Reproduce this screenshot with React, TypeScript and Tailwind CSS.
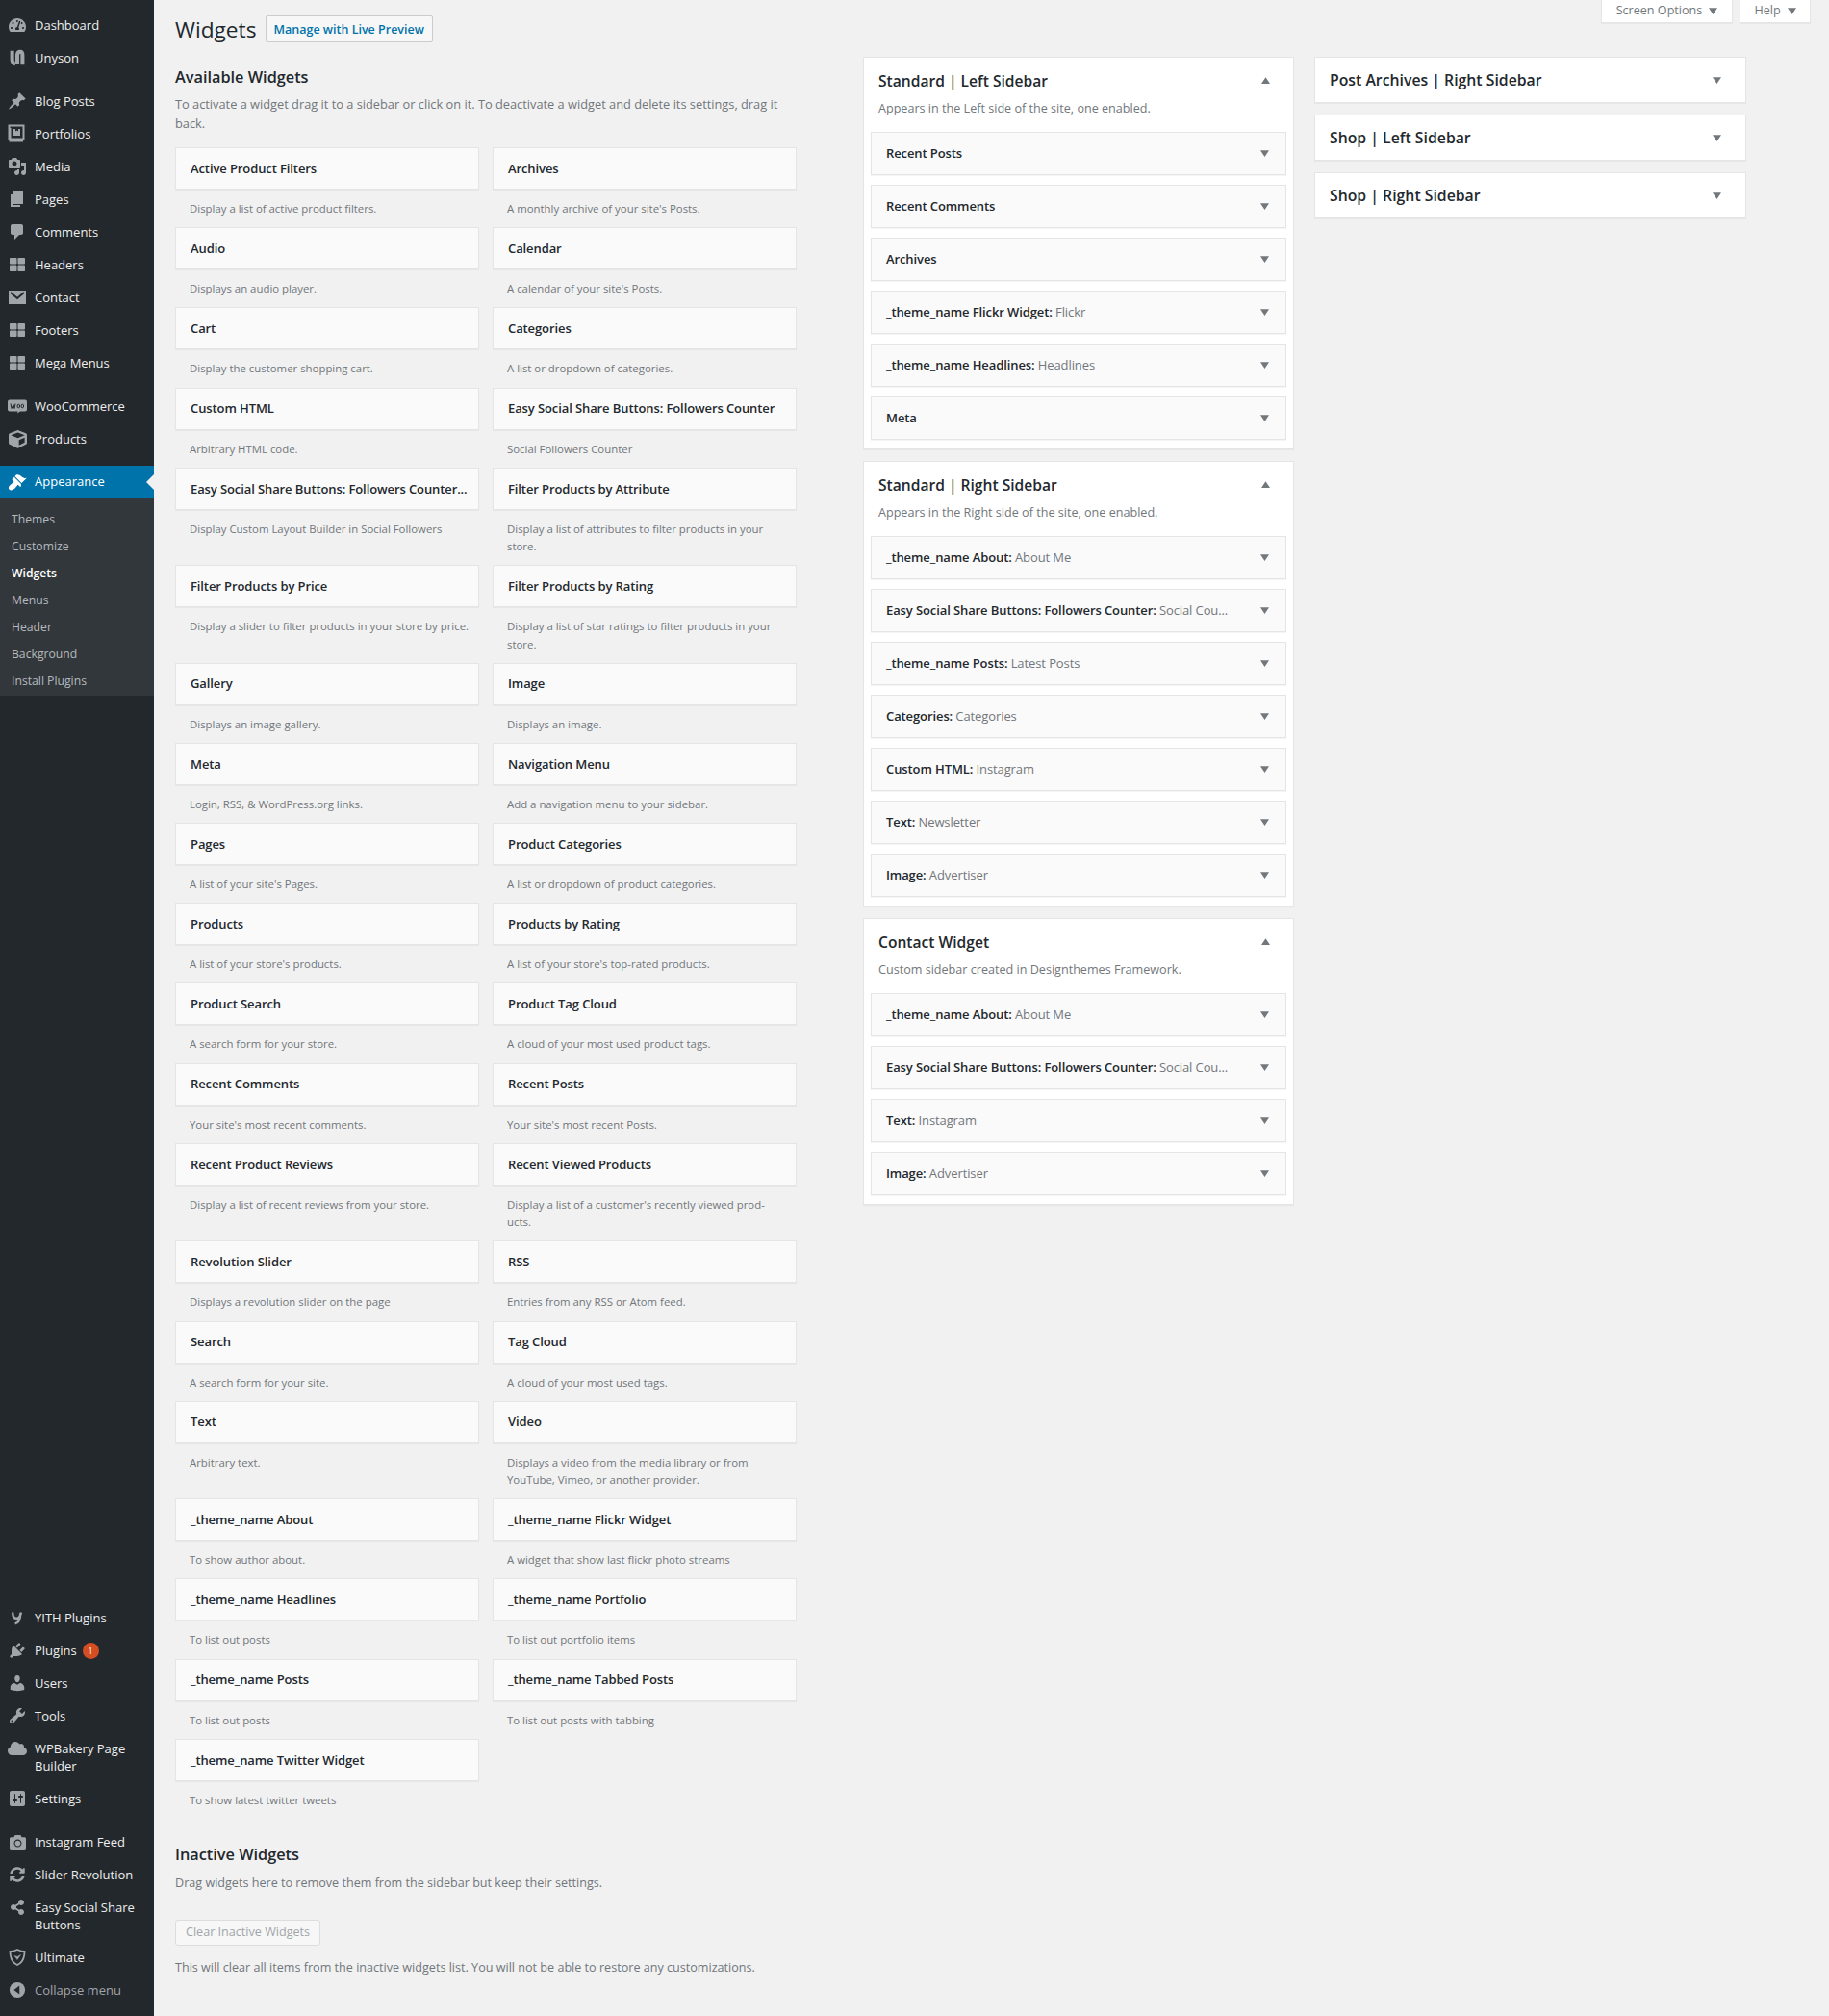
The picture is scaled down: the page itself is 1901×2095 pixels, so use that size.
import React from 'react';
import { FaTachometerAlt, FaThLarge, FaCube, FaCloud, FaCamera, FaSyncAlt, FaShareAlt } from 'react-icons/fa';

const fontStack = { fontFamily: '"Open Sans", "Noto Sans", sans-serif' };

const Dash = ({ d }: { d: string }) => (
  <svg viewBox="0 0 20 20" className="w-[20px] h-[20px]" fill="currentColor"><path d={d} /></svg>
);

const pinPath = 'M10.44 3.02l1.82-1.82 6.36 6.35-1.83 1.82c-1.05-.68-2.48-.57-3.41.36l-.75.75c-.92.93-1.04 2.35-.35 3.41l-1.83 1.82-2.41-2.41-2.8 2.79c-.42.42-3.38 2.71-3.8 2.29s1.86-3.39 2.28-3.81l2.79-2.79L4.1 9.36l1.83-1.82c1.05.69 2.48.57 3.4-.36l.75-.75c.93-.92 1.05-2.35.36-3.41z';
const commentPath = 'M5 2h9c1.1 0 2 .9 2 2v7c0 1.1-.9 2-2 2h-2l-5 5v-5H5c-1.1 0-2-.9-2-2V4c0-1.1.9-2 2-2z';
const pagePath = 'M6 15V2h10v13H6zm-1 1h8v2H3V5h2v11z';
const mediaPath = 'M13 11V4c0-.55-.45-1-1-1h-1.67L9 1H5L3.67 3H2c-.55 0-1 .45-1 1v7c0 .55.45 1 1 1h10c.55 0 1-.45 1-1zM7 4.5c1.38 0 2.5 1.12 2.5 2.5S8.38 9.5 7 9.5 4.5 8.38 4.5 7 5.62 4.5 7 4.5zM14 6h5v10.5c0 1.38-1.12 2.5-2.5 2.5S14 17.88 14 16.5s1.12-2.5 2.5-2.5c.17 0 .34.02.5.05V9h-3V6zm-4 8.05V13h2v3.5c0 1.38-1.12 2.5-2.5 2.5S7 17.88 7 16.5 8.12 14 9.500 14c.17 0 .34.02.5.05z';
const usersPath = 'M10 9.25c-2.27 0-2.73-3.44-2.73-3.44C7 4.02 7.82 2 9.97 2c2.16 0 2.98 2.02 2.71 3.81 0 0-.41 3.44-2.68 3.44zm0 2.57L12.72 10c2.39 0 4.52 2.33 4.52 4.53v2.49s-3.65 1.13-7.24 1.13c-3.65 0-7.24-1.13-7.24-1.13v-2.49c0-2.25 1.94-4.48 4.15-4.48z';
const toolsPath = 'M16.68 9.77c-1.34 1.34-3.3 1.67-4.95.99l-5.41 6.52c-.99.99-2.59.99-3.58 0s-.99-2.59 0-3.57l6.52-5.42c-.68-1.65-.35-3.61.99-4.95 1.28-1.28 3.12-1.62 4.72-1.06l-2.89 2.89 2.82 2.82 2.86-2.87c.53 1.58.18 3.4-1.08 4.67zM3.81 16.21c.4.39 1.04.39 1.43 0 .4-.4.4-1.04 0-1.44-.39-.39-1.03-.39-1.43 0-.39.4-.39 1.04 0 1.44z';
const pluginsPath = 'M13.11 4.36L9.87 7.6 8 5.73l3.24-3.24c.35-.34 1.05-.2 1.56.32.52.51.66 1.21.31 1.55zm-8 1.77l.91-1.12 9.01 9.01-1.19.84c-.71.71-2.63 1.16-3.82 1.16H6.14L4.9 17.26c-.59.59-1.54.59-2.12 0-.59-.58-.59-1.53 0-2.12l1.24-1.24v-3.88c0-1.13.4-3.19 1.09-3.89zm7.26 3.97l3.24-3.24c.34-.35 1.04-.21 1.55.31.52.51.66 1.21.31 1.55l-3.24 3.25z';
const settingsPath = 'M18 16V4c0-1.1-.9-2-2-2H4c-1.1 0-2 .9-2 2v12c0 1.1.9 2 2 2h12c1.1 0 2-.9 2-2zM8 11h1c.55 0 1 .45 1 1s-.45 1-1 1H8v1.5c0 .28-.22.5-.5.5s-.5-.22-.5-.5V13H6c-.55 0-1-.45-1-1s.45-1 1-1h1V5.500c0-.28.22-.5.5-.5s.5.22.5.5V11zm5-2h-1c-.55 0-1-.45-1-1s.45-1 1-1h1V5.500c0-.28.22-.5.5-.5s.5.22.5.5V7h1c.55 0 1 .45 1 1s-.45 1-1 1h-1v5.500c0 .28-.22.5-.5.5s-.5-.22-.5-.5V9z';
const appearancePath = 'M14.48 11.06L7.41 3.99l1.5-1.5c.5-.56 2.3-.47 3.51.32 1.21.8 1.43 1.28 2.91 2.1 1.18.64 2.45 1.26 4.45.85zm-.71.71L6.7 4.7 4.93 6.47c-.39.39-.39 1.02 0 1.41l1.06 1.06c.39.39.39 1.03 0 1.42-.6.6-1.43 1.11-2.21 1.69-.35.26-.7.53-1.01.84C1.43 13.73 0 16.18 1.59 17.77c1.59 1.59 4.03.15 5.88-1.17.31-.31.58-.65.84-1.01.59-.78 1.1-1.6 1.7-2.19.39-.39 1.03-.39 1.42 0l1.06 1.06c.39.39 1.02.39 1.41 0z';

const UnysonIcon = () => (
  <svg viewBox="0 0 20 20" className="w-[18px] h-[18px]" fill="none" stroke="currentColor" strokeWidth="4.5">
    <path d="M4 2v10c0 3 1.500 5 3.500 5M10 17V7c0-3 1.500-4 3.500-4s2.500 2 2.500 4v11" />
  </svg>
);

const PortfolioIcon = () => (
  <svg viewBox="0 0 20 20" className="w-[20px] h-[20px]" fill="none" stroke="currentColor">
    <path d="M2.500 4v13.500H16" strokeWidth="2" />
    <rect x="1.500" y="1.500" width="15" height="14" strokeWidth="2" />
    <path d="M5 12V5h8v7z" fill="currentColor" stroke="none" />
    <path d="M8 4.500v3l1.500-1 1.500 1v-3z" fill="#23282d" stroke="none" />
  </svg>
);

const MailIcon = () => (
  <svg viewBox="0 0 20 20" className="w-[20px] h-[20px]">
    <rect x="1" y="3" width="18" height="14" fill="currentColor" />
    <path d="M3 5l7 6 7-6" fill="none" stroke="#23282d" strokeWidth="2" />
  </svg>
);

const WooIcon = () => (
  <svg viewBox="0 0 20 14" className="w-[20px] h-[15px]">
    <path d="M2 0h16a2 2 0 0 1 2 2v8a2 2 0 0 1-2 2h-5l-3 2 .5-2H2a2 2 0 0 1-2-2V2a2 2 0 0 1 2-2z" fill="currentColor" />
    <path d="M3 4l1 5 2-4 1 4 1-5M10 6.500a1.300 1.800 0 1 0 2.600 0a1.300 1.800 0 1 0-2.600 0M14 6.500a1.300 1.800 0 1 0 2.600 0a1.300 1.800 0 1 0-2.600 0" fill="none" stroke="#23282d" strokeWidth="1" />
  </svg>
);

const YithIcon = () => (
  <svg viewBox="0 0 20 20" className="w-[16px] h-[16px]" fill="none" stroke="currentColor" strokeWidth="3">
    <path d="M4 3c0 6 2 8 5 8s5-3 6-8M14 4c0 8-2 13-7 14" />
  </svg>
);

const ShieldIcon = () => (
  <svg viewBox="0 0 20 20" className="w-[20px] h-[20px]" fill="none" stroke="currentColor">
    <path d="M10 2c3 1.500 5 2 7.500 2 0 7-2 11.500-7.500 14C4.500 15.500 2.500 11 2.500 4 5 4 7 3.500 10 2z" strokeWidth="1.800" />
    <path d="M7 8.500l3 4 3.500-5-3.500 2z" fill="currentColor" strokeWidth="0.500" />
  </svg>
);

const CollapseIcon = () => (
  <svg viewBox="0 0 20 20" className="w-[18px] h-[18px]">
    <circle cx="10" cy="10" r="9" fill="currentColor" />
    <path d="M12.500 5v10L6 10z" fill="#23282d" />
  </svg>
);

const Triangle = ({ up = false, className = '' }: { up?: boolean; className?: string }) => (
  <svg viewBox="0 0 8 6" className={`w-[9px] h-[7px] fill-[#72777c] ${className}`}>
    <path d={up ? 'M4 0l4 6H0z' : 'M0 0h8L4 6z'} />
  </svg>
);

const topMenu: { label: string; icon: React.ReactNode; gap?: boolean }[] = [
  { label: 'Dashboard', icon: <FaTachometerAlt size={18} /> },
  { label: 'Unyson', icon: <UnysonIcon /> },
  { label: 'Blog Posts', icon: <Dash d={pinPath} />, gap: true },
  { label: 'Portfolios', icon: <PortfolioIcon /> },
  { label: 'Media', icon: <Dash d={mediaPath} /> },
  { label: 'Pages', icon: <Dash d={pagePath} /> },
  { label: 'Comments', icon: <Dash d={commentPath} /> },
  { label: 'Headers', icon: <FaThLarge size={16} /> },
  { label: 'Contact', icon: <MailIcon /> },
  { label: 'Footers', icon: <FaThLarge size={16} /> },
  { label: 'Mega Menus', icon: <FaThLarge size={16} /> },
  { label: 'WooCommerce', icon: <WooIcon />, gap: true },
  { label: 'Products', icon: <FaCube size={19} /> },
];

const subMenu = ['Themes', 'Customize', 'Widgets', 'Menus', 'Header', 'Background', 'Install Plugins'];

const bottomMenu: { label: React.ReactNode; icon: React.ReactNode; gap?: boolean; dim?: boolean }[] = [
  { label: 'YITH Plugins', icon: <YithIcon /> },
  {
    label: (
      <span className="flex items-center gap-[6px]">
        Plugins
        <span className="w-[17px] h-[17px] rounded-full bg-[#d54e21] text-white text-[9px] leading-[17px] text-center">1</span>
      </span>
    ),
    icon: <Dash d={pluginsPath} />,
  },
  { label: 'Users', icon: <Dash d={usersPath} /> },
  { label: 'Tools', icon: <Dash d={toolsPath} /> },
  { label: 'WPBakery Page Builder', icon: <FaCloud size={20} /> },
  { label: 'Settings', icon: <Dash d={settingsPath} /> },
  { label: 'Instagram Feed', icon: <FaCamera size={17} />, gap: true },
  { label: 'Slider Revolution', icon: <FaSyncAlt size={16} /> },
  { label: 'Easy Social Share Buttons', icon: <FaShareAlt size={16} /> },
  { label: 'Ultimate', icon: <ShieldIcon /> },
  { label: 'Collapse menu', icon: <CollapseIcon />, dim: true },
];

const availableWidgets: [string, string][] = [
  ['Active Product Filters', 'Display a list of active product filters.'],
  ['Archives', "A monthly archive of your site's Posts."],
  ['Audio', 'Displays an audio player.'],
  ['Calendar', "A calendar of your site's Posts."],
  ['Cart', 'Display the customer shopping cart.'],
  ['Categories', 'A list or dropdown of categories.'],
  ['Custom HTML', 'Arbitrary HTML code.'],
  ['Easy Social Share Buttons: Followers Counter', 'Social Followers Counter'],
  ['Easy Social Share Buttons: Followers Counter...', 'Display Custom Layout Builder in Social Followers'],
  ['Filter Products by Attribute', 'Display a list of attributes to filter products in your store.'],
  ['Filter Products by Price', 'Display a slider to filter products in your store by price.'],
  ['Filter Products by Rating', 'Display a list of star ratings to filter products in your store.'],
  ['Gallery', 'Displays an image gallery.'],
  ['Image', 'Displays an image.'],
  ['Meta', 'Login, RSS, & WordPress.org links.'],
  ['Navigation Menu', 'Add a navigation menu to your sidebar.'],
  ['Pages', "A list of your site's Pages."],
  ['Product Categories', 'A list or dropdown of product categories.'],
  ['Products', "A list of your store's products."],
  ['Products by Rating', "A list of your store's top-rated products."],
  ['Product Search', 'A search form for your store.'],
  ['Product Tag Cloud', 'A cloud of your most used product tags.'],
  ['Recent Comments', "Your site's most recent comments."],
  ['Recent Posts', "Your site's most recent Posts."],
  ['Recent Product Reviews', 'Display a list of recent reviews from your store.'],
  ['Recent Viewed Products', "Display a list of a customer's recently viewed prod-ucts."],
  ['Revolution Slider', 'Displays a revolution slider on the page'],
  ['RSS', 'Entries from any RSS or Atom feed.'],
  ['Search', 'A search form for your site.'],
  ['Tag Cloud', 'A cloud of your most used tags.'],
  ['Text', 'Arbitrary text.'],
  ['Video', 'Displays a video from the media library or from YouTube, Vimeo, or another provider.'],
  ['_theme_name About', 'To show author about.'],
  ['_theme_name Flickr Widget', 'A widget that show last flickr photo streams'],
  ['_theme_name Headlines', 'To list out posts'],
  ['_theme_name Portfolio', 'To list out portfolio items'],
  ['_theme_name Posts', 'To list out posts'],
  ['_theme_name Tabbed Posts', 'To list out posts with tabbing'],
  ['_theme_name Twitter Widget', 'To show latest twitter tweets'],
];

const sidebars: { title: string; desc: string; items: [string, string][] }[] = [
  {
    title: 'Standard | Left Sidebar',
    desc: 'Appears in the Left side of the site, one enabled.',
    items: [
      ['Recent Posts', ''],
      ['Recent Comments', ''],
      ['Archives', ''],
      ['_theme_name Flickr Widget', 'Flickr'],
      ['_theme_name Headlines', 'Headlines'],
      ['Meta', ''],
    ],
  },
  {
    title: 'Standard | Right Sidebar',
    desc: 'Appears in the Right side of the site, one enabled.',
    items: [
      ['_theme_name About', 'About Me'],
      ['Easy Social Share Buttons: Followers Counter', 'Social Cou...'],
      ['_theme_name Posts', 'Latest Posts'],
      ['Categories', 'Categories'],
      ['Custom HTML', 'Instagram'],
      ['Text', 'Newsletter'],
      ['Image', 'Advertiser'],
    ],
  },
  {
    title: 'Contact Widget',
    desc: 'Custom sidebar created in Designthemes Framework.',
    items: [
      ['_theme_name About', 'About Me'],
      ['Easy Social Share Buttons: Followers Counter', 'Social Cou...'],
      ['Text', 'Instagram'],
      ['Image', 'Advertiser'],
    ],
  },
];

const MenuItem = ({ label, icon, gap, dim }: { label: React.ReactNode; icon: React.ReactNode; gap?: boolean; dim?: boolean }) => (
  <div className={`flex min-h-[34px] py-[8px] text-[13px] leading-[18px] ${gap ? 'mt-[11px]' : ''} ${dim ? 'text-[#a0a5aa]' : 'text-[#eeeeee]'}`}>
    <div className="w-[36px] h-[18px] flex items-center justify-center text-[#a0a5aa] shrink-0">{icon}</div>
    <div className="pr-[8px]">{label}</div>
  </div>
);

const SidebarNav = () => (
  <aside className="w-[160px] shrink-0 bg-[#23282d] flex flex-col justify-between pt-[9px] pb-[10px]">
    <div>
      {topMenu.map(item => <MenuItem key={item.label} {...item} />)}
      <div className="relative mt-[11px] h-[34px] bg-[#0073aa] flex items-center text-white text-[13px]">
        <div className="w-[36px] flex items-center justify-center"><Dash d={appearancePath} /></div>
        Appearance
        <span className="absolute right-0 top-[9px] border-y-[8px] border-r-[8px] border-y-transparent border-r-[#f1f1f1]" />
      </div>
      <div className="bg-[#32373c] pt-[8px] pb-[1px]">
        {subMenu.map(item => (
          <div key={item} className={`h-[28px] pl-[12px] text-[12.2px] leading-[28px] ${item === 'Widgets' ? 'text-white font-semibold' : 'text-[#b4b9be]'}`}>
            {item}
          </div>
        ))}
      </div>
    </div>
    <div>
      {bottomMenu.map((item, i) => <MenuItem key={i} {...item} />)}
    </div>
  </aside>
);

const WidgetTile = ({ title, desc }: { title: string; desc: string }) => (
  <div>
    <div className="h-[44px] pl-[15px] pt-[1px] bg-[#fafafa] border border-[#e5e5e5] shadow-[0_1px_1px_rgba(0,0,0,0.04)] flex items-center text-[13px] tracking-[-0.1px] font-semibold text-[#23282d] whitespace-nowrap">
      {title}
    </div>
    <div className="pt-[11px] pb-[9.9px] pl-[15px] pr-[10px] text-[11.4px] leading-[18.3px] text-[#72777c]">{desc}</div>
  </div>
);

const SidebarBox = ({ title, desc, items }: { title: string; desc: string; items: [string, string][] }) => (
  <div className="bg-white border border-[#e5e5e5] shadow-[0_1px_1px_rgba(0,0,0,0.04)] mb-[12px] px-[7px] pb-[9px]">
    <div className="h-[77px] px-[8px] pt-[12px]">
      <div className="flex items-center justify-between pr-[9px]">
        <h2 className="text-[15.6px] leading-[24px] font-semibold text-[#23282d]">{title}</h2>
        <Triangle up className="-mt-[2px]" />
      </div>
      <p className="mt-[8px] text-[12.6px] leading-[18px] text-[#72777c]">{desc}</p>
    </div>
    <div className="flex flex-col gap-[10px]">
      {items.map(([name, sub], i) => (
        <div key={i} className="h-[45px] pl-[15px] pr-[17px] bg-[#fafafa] border border-[#e5e5e5] shadow-[0_1px_1px_rgba(0,0,0,0.04)] flex items-center justify-between text-[13px] tracking-[-0.1px]">
          <div className="whitespace-nowrap pt-[1px]">
            <span className="font-semibold text-[#23282d]">{name}{sub ? ':' : ''}</span>
            {sub && <span className="font-normal text-[#72777c]"> {sub}</span>}
          </div>
          <Triangle className="shrink-0 -mt-[1px]" />
        </div>
      ))}
    </div>
  </div>
);

const CollapsedBox = ({ title }: { title: string }) => (
  <div className="h-[48px] mb-[12px] pl-[15px] pr-[25px] bg-white border border-[#e5e5e5] shadow-[0_1px_1px_rgba(0,0,0,0.04)] flex items-center justify-between">
    <h2 className="pt-[2px] text-[15.8px] font-semibold text-[#23282d]">{title}</h2>
    <Triangle />
  </div>
);

const tabClass = 'h-[24px] bg-white border border-t-0 border-[#e5e5e5] shadow-[0_1px_1px_rgba(0,0,0,0.04)] flex items-center justify-center gap-[7px] text-[12.6px] text-[#72777c]';

export default function App() {
  return (
    <div className="flex min-h-[2095px] bg-[#f1f1f1]" style={fontStack}>
      <SidebarNav />
      <main className="flex-1 min-w-0 pl-[22px]">
        <div className="h-0 flex justify-end gap-[7px] pr-[19px]">
          <div className={`${tabClass} w-[137px]`}>Screen Options <Triangle /></div>
          <div className={`${tabClass} w-[74px]`}>Help <Triangle /></div>
        </div>
        <div className="flex items-center gap-[9px] pt-[16px] h-[44px]">
          <h1 className="mt-[1px] text-[22.7px] leading-[28px] text-[#23282d]">Widgets</h1>
          <button className="h-[28px] px-[8px] pt-[2px] border border-[#cccccc] bg-[#f7f7f7] rounded-[2px] text-[12.5px] font-semibold text-[#0073aa]">
            Manage with Live Preview
          </button>
        </div>
        <div className="flex items-start">
          <section className="w-[645px] shrink-0">
            <h2 className="mt-[24px] text-[16.3px] leading-[24px] font-semibold text-[#23282d]">Available Widgets</h2>
            <p className="mt-[6px] text-[12.8px] leading-[20px] text-[#72777c]">
              To activate a widget drag it to a sidebar or click on it. To deactivate a widget and delete its settings, drag it back.
            </p>
            <div className="mt-[15px] grid grid-cols-[316px_316px] gap-x-[14px]">
              {availableWidgets.map(([title, desc]) => <WidgetTile key={title} title={title} desc={desc} />)}
            </div>
            <h2 className="mt-[25px] text-[16.3px] leading-[24px] font-semibold text-[#23282d]">Inactive Widgets</h2>
            <p className="mt-[8px] text-[12.6px] leading-[20px] text-[#72777c]">Drag widgets here to remove them from the sidebar but keep their settings.</p>
            <button disabled className="mt-[28px] h-[27px] px-[10px] border border-[#dddddd] bg-[#f7f7f7] rounded-[3px] text-[12.6px] text-[#a0a5aa]">
              Clear Inactive Widgets
            </button>
            <p className="mt-[13px] text-[12.6px] leading-[20px] text-[#72777c]">
              This will clear all items from the inactive widgets list. You will not be able to restore any customizations.
            </p>
          </section>
          <section className="w-[448px] shrink-0 ml-[70px] mt-[15px]">
            {sidebars.map(box => <SidebarBox key={box.title} {...box} />)}
          </section>
          <section className="w-[449px] shrink-0 ml-[21px] mt-[15px]">
            <CollapsedBox title="Post Archives | Right Sidebar" />
            <CollapsedBox title="Shop | Left Sidebar" />
            <CollapsedBox title="Shop | Right Sidebar" />
          </section>
        </div>
      </main>
    </div>
  );
}
